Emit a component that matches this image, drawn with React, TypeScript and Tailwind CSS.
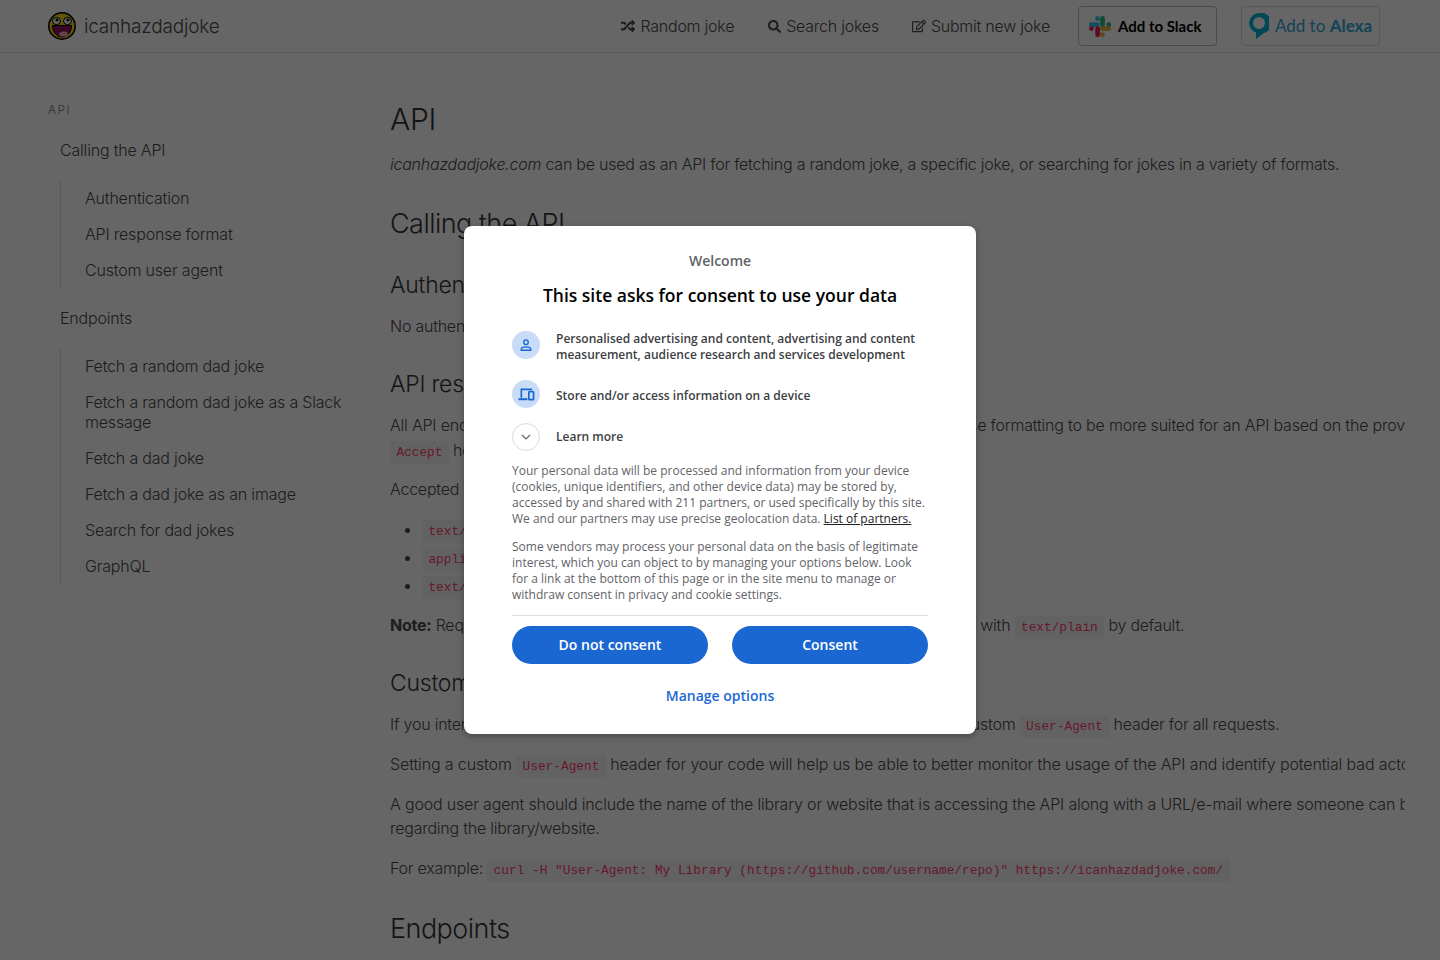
import React from "react";
import { FaRandom, FaSearch, FaRegEdit } from "react-icons/fa";

const Code = ({ children }: { children: React.ReactNode }) => (
  <code className="bg-[#f5f5f5] text-[#ff4070] px-[6.4px] py-[4px] text-[12.8px] leading-none tracking-normal font-['Liberation_Mono',monospace]">{children}</code>
);

const Face = () => (
  <svg viewBox="0 0 28 28" className="w-7 h-7 shrink-0">
    <circle cx="14" cy="14" r="13.2" fill="#f7d51d" stroke="#000" strokeWidth="1.5" />
    <ellipse cx="8.5" cy="9" rx="4" ry="3.6" fill="#fff" stroke="#000" strokeWidth="1" />
    <ellipse cx="19.5" cy="9" rx="4" ry="3.6" fill="#fff" stroke="#000" strokeWidth="1" />
    <circle cx="9" cy="8" r="1.6" fill="#000" />
    <circle cx="20" cy="8" r="1.6" fill="#000" />
    <path d="M4.5 13.5 H23.5 C23.5 20 19.5 25 14 25 C8.5 25 4.5 20 4.5 13.5Z" fill="#8e0f5c" stroke="#000" strokeWidth="1" />
    <ellipse cx="15.5" cy="22" rx="4.5" ry="2.6" fill="#f5a3c0" />
  </svg>
);

const Slack = () => (
  <svg viewBox="0 0 54 54" className="w-[23px] h-[23px] shrink-0">
    <path fill="#36c5f0" d="M19.7 2.5a5.5 5.5 0 0 0 0 11h5.5V8a5.5 5.5 0 0 0-5.5-5.5zM19.7 17.2H5a5.5 5.5 0 0 0 0 11h14.7a5.5 5.5 0 0 0 0-11z" />
    <path fill="#2eb67d" d="M52 22.7a5.5 5.5 0 0 0-11 0v5.5h5.5a5.5 5.5 0 0 0 5.5-5.5zM37.3 22.7V8a5.5 5.5 0 0 0-11 0v14.7a5.5 5.5 0 0 0 11 0z" />
    <path fill="#ecb22e" d="M31.8 52a5.5 5.5 0 0 0 0-11h-5.5v5.5a5.5 5.5 0 0 0 5.5 5.5zM31.8 37.3h14.7a5.5 5.5 0 0 0 0-11H31.8a5.5 5.5 0 0 0 0 11z" />
    <path fill="#e01e5a" d="M0 31.8a5.5 5.5 0 0 0 11 0v-5.5H5.5A5.5 5.5 0 0 0 0 31.8zM14.7 31.8v14.7a5.5 5.5 0 0 0 11 0V31.8a5.5 5.5 0 0 0-11 0z" />
  </svg>
);

const Alexa = () => (
  <svg viewBox="0 0 20 26" className="w-[20px] h-[26px] shrink-0">
    <path fill="#00b4d8" fillRule="evenodd" d="M10 0a10 10 0 0 0-3 19.5V26l7-5.6A10 10 0 0 0 10 0zm0 4a6 6 0 1 1 0 12 6 6 0 0 1 0-12z" />
  </svg>
);

const NavItem = ({ icon, label, size }: { icon: React.ReactNode; label: string; size: string }) => (
  <a className="flex items-center gap-[5px] text-[16px] tracking-[-0.015em] text-[#4a4a4a]">
    <span className={`${size} text-[#4a4a4a]`}>{icon}</span>
    {label}
  </a>
);

const MenuRow = ({ children }: { children: React.ReactNode }) => (
  <li className="px-3 py-2 leading-5 text-[16px] tracking-[-0.012em] text-[#4a4a4a]">{children}</li>
);

const P = ({ children, className = "" }: { children: React.ReactNode; className?: string }) => (
  <p className={`whitespace-nowrap ${className}`}>{children}</p>
);

const RowIcon = ({ children }: { children: React.ReactNode }) => (
  <span className="w-7 h-7 rounded-full bg-[#c8dcf7] flex items-center justify-center shrink-0">{children}</span>
);

export default function App() {
  return (
    <div className="relative h-[960px] overflow-hidden bg-white text-[#4a4a4a] font-['Inter',sans-serif] font-light">
      <header className="h-[53px] border-b border-[#e8e8e8] flex items-center px-12 pr-[60px]">
        <div className="flex items-center gap-2">
          <Face />
          <span className="text-[19px] tracking-[-0.01em] mt-[3px] text-[#4a4a4a]">icanhazdadjoke</span>
        </div>
        <nav className="ml-auto flex items-center">
          <NavItem size="text-[14px]" icon={<FaRandom />} label="Random joke" />
          <div className="w-[34px]" />
          <NavItem size="text-[13px]" icon={<FaSearch />} label="Search jokes" />
          <div className="w-[33px]" />
          <NavItem size="text-[14px]" icon={<FaRegEdit />} label="Submit new joke" />
          <div className="w-[28px]" />
          <a className="w-[139px] h-10 border border-[#bbb] rounded-[4px] flex items-center pl-[10px] gap-[6px] text-[15px] font-bold text-[#000] font-['Lato',sans-serif]">
            <Slack />
            Add to Slack
          </a>
          <div className="w-6" />
          <a className="w-[139px] h-10 border border-[#ddd] rounded-[4px] flex items-center justify-center gap-[6px] text-[17px] text-[#31a8d8] font-normal font-['Lato',sans-serif]">
            <Alexa />
            <span>Add to <span className="font-bold">Alexa</span></span>
          </a>
        </nav>
      </header>

      <div className="flex">
        <aside className="w-[390px] shrink-0 pl-12 pr-6 pt-[49px]">
          <p className="text-[12px] leading-4 tracking-[0.12em] text-[#7a7a7a] mb-[14px]">API</p>
          <ul>
            <MenuRow>Calling the API</MenuRow>
            <ul className="ml-3 my-3 border-l border-[#dbdbdb] pl-3">
              <MenuRow>Authentication</MenuRow>
              <MenuRow>API response format</MenuRow>
              <MenuRow>Custom user agent</MenuRow>
            </ul>
            <MenuRow>Endpoints</MenuRow>
            <ul className="ml-3 my-3 border-l border-[#dbdbdb] pl-3">
              <MenuRow>Fetch a random dad joke</MenuRow>
              <MenuRow>Fetch a random dad joke as a Slack message</MenuRow>
              <MenuRow>Fetch a dad joke</MenuRow>
              <MenuRow>Fetch a dad joke as an image</MenuRow>
              <MenuRow>Search for dad jokes</MenuRow>
              <MenuRow>GraphQL</MenuRow>
            </ul>
          </ul>
        </aside>

        <main className="w-[1015px] overflow-hidden pt-[48px] text-[16px] leading-6 tracking-[-0.015em] text-[#4a4a4a]">
          <h1 className="text-[30px] leading-9 text-[#363636]">API</h1>
          <P className="mt-[15px]"><em>icanhazdadjoke.com</em> can be used as an API for fetching a random joke, a specific joke, or searching for jokes in a variety of formats.</P>
          <h2 className="text-[27px] leading-8 tracking-[-0.02em] text-[#363636] mt-[32px]">Calling the API</h2>
          <h3 className="text-[23px] leading-8 text-[#363636] mt-[29px]">Authentication</h3>
          <P className="mt-[13px]">No authentication is required to use the API.</P>
          <h3 className="text-[23px] leading-8 text-[#363636] mt-[30px]">API response format</h3>
          <P className="mt-[13px] tracking-[-0.0125em]">All API endpoints follow their respective browser URLs, but we adjust the response formatting to be more suited for an API based on the provided HTTP</P>
          <P className="mt-[1px]"><Code>Accept</Code> header.</P>
          <P className="mt-[15px]">Accepted</P>
          <ul className="list-disc pl-[32px] mt-[16px] space-y-[4px]">
            <li className="h-6"><Code>text/html</Code></li>
            <li className="h-6"><Code>application/json</Code></li>
            <li className="h-6"><Code>text/plain</Code></li>
          </ul>
          <P className="mt-[16px]"><strong className="font-bold">Note:</strong> Requests that do not set an Accept header will receive a response returned with <Code>text/plain</Code> by default.</P>
          <h3 className="text-[23px] leading-8 text-[#363636] mt-[30px]">Custom user agent</h3>
          <P className="mt-[13px] tracking-[-0.014em]">If you intend on using the icanhazdadjoke.com API we kindly ask that you set a custom <Code>User-Agent</Code> header for all requests.</P>
          <P className="mt-[16px] tracking-[-0.008em]">Setting a custom <Code>User-Agent</Code> header for your code will help us be able to better monitor the usage of the API and identify potential bad actors.</P>
          <P className="mt-[16px] tracking-[-0.011em]">A good user agent should include the name of the library or website that is accessing the API along with a URL/e-mail where someone can be contacted</P>
          <P>regarding the library/website.</P>
          <P className="mt-[16px]">For example: <Code>curl -H "User-Agent: My Library (https://github.com/username/repo)" https://icanhazdadjoke.com/</Code></P>
          <h2 className="text-[27px] leading-8 tracking-[-0.02em] text-[#363636] mt-[33px]">Endpoints</h2>
        </main>
      </div>

      <div className="absolute inset-0 bg-black/60 flex items-center justify-center font-['Open_Sans',sans-serif] font-normal">
        <div className="w-[512px] h-[508px] bg-white rounded-lg shadow-[0_2px_6px_rgba(0,0,0,0.3)] px-12 pt-[26px] text-[12px] leading-4">
          <p className="text-center text-[14px] leading-[18px] font-semibold text-[#5f6368]">Welcome</p>
          <h2 className="text-center text-[17.5px] leading-6 font-semibold text-[#000] mt-[13px]">This site asks for consent to use your data</h2>
          <div className="flex items-start gap-4 mt-[24px]">
            <RowIcon>
              <svg viewBox="0 0 16 16" className="w-[14px] h-[14px]" fill="none" stroke="#1a67d2" strokeWidth="1.5"><circle cx="8" cy="4.8" r="2.6" /><path d="M2.5 14v-1.2c0-1.6 2.6-2.6 5.5-2.6s5.5 1 5.5 2.6V14z" /></svg>
            </RowIcon>
            <p className="font-semibold text-[#3c4043]">Personalised advertising and content, advertising and content<br />measurement, audience research and services development</p>
          </div>
          <div className="flex items-start gap-4 mt-[17px]">
            <RowIcon>
              <svg viewBox="0 0 18 16" className="w-[17px] h-[15px]" fill="none" stroke="#1a67d2" strokeWidth="1.8"><path d="M15 2.5H3.5v9" /><path d="M0.5 13h9.5" strokeWidth="2.2" /><rect x="11.5" y="5" width="5" height="8.5" rx="0.7" /></svg>
            </RowIcon>
            <p className="font-semibold text-[#3c4043] mt-[8px]">Store and/or access information on a device</p>
          </div>
          <div className="flex items-center gap-4 mt-[15px]">
            <span className="w-7 h-7 rounded-full border border-[#dadce0] flex items-center justify-center shrink-0">
              <svg viewBox="0 0 12 12" className="w-3 h-3" fill="none" stroke="#5f6368" strokeWidth="1.2"><path d="M2 4l4 4 4-4" /></svg>
            </span>
            <p className="font-semibold text-[#3c4043]">Learn more</p>
          </div>
          <p className="text-[#5f6368] mt-[12px]">Your personal data will be processed and information from your device<br />(cookies, unique identifiers, and other device data) may be stored by,<br />accessed by and shared with 211 partners, or used specifically by this site.<br />We and our partners may use precise geolocation data. <a className="underline text-[#202124]">List of partners.</a></p>
          <p className="text-[#5f6368] mt-[12px]">Some vendors may process your personal data on the basis of legitimate<br />interest, which you can object to by managing your options below. Look<br />for a link at the bottom of this page or in the site menu to manage or<br />withdraw consent in privacy and cookie settings.</p>
          <div className="border-t border-[#dadce0] mt-[12px] pt-[10px] flex gap-6">
            <button className="flex-1 h-[38px] rounded-full bg-[#1a67d2] text-white text-[14px] font-semibold">Do not consent</button>
            <button className="flex-1 h-[38px] rounded-full bg-[#1a67d2] text-white text-[14px] font-semibold">Consent</button>
          </div>
          <p className="text-center text-[14px] leading-5 font-semibold text-[#1a67d2] mt-[22px]">Manage options</p>
        </div>
      </div>
    </div>
  );
}
